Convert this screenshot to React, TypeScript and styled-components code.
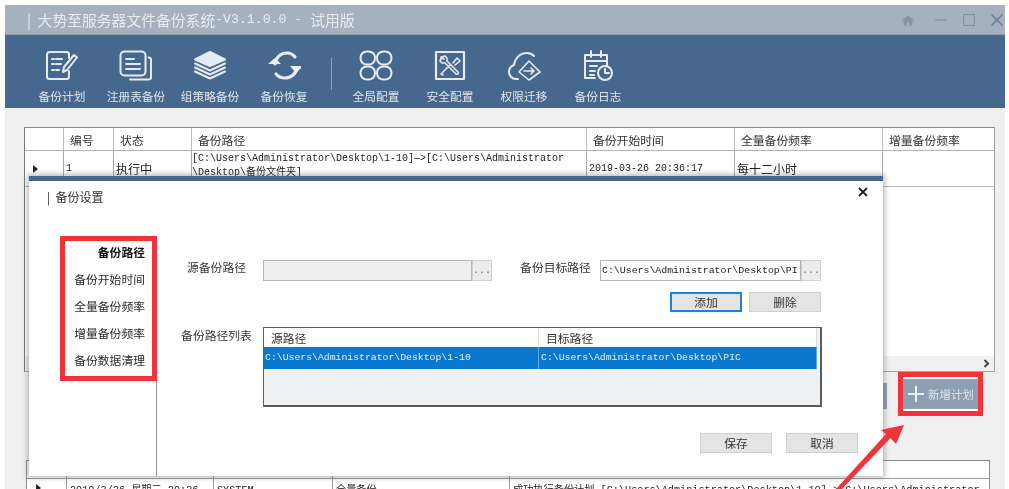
import React from "react";
import styled, { createGlobalStyle } from "styled-components";

const CJK = `"Noto Sans CJK SC", sans-serif`;
const MONO = `"Liberation Mono", "Noto Sans CJK SC", monospace`;
const RED = "#f1343b";
const NAVY = "#46688f";

const GlobalStyle = createGlobalStyle`
  html, body {
    margin: 0;
    padding: 0;
    background: #fff;
    overflow: hidden;
  }
  * { box-sizing: border-box; }
`;

const Page = styled.div`
  position: relative;
  width: 1009px;
  height: 489px;
  overflow: hidden;
  padding: 5px 4px 0 5px;
  font-family: ${CJK};
  color: #333;
  filter: blur(0.4px);
`;

const TitleBar = styled.div`
  height: 30px;
  background: #a6b1bf;
  border-bottom: 1px solid #8c9aab;
  display: flex;
  align-items: center;
  padding-left: 22px;
  color: #e9ecf0;
  font-size: 14.8px;
  white-space: pre;
`;

const Version = styled.span`
  font-family: ${MONO};
  font-size: 13.2px;
`;

const WindowButtons = styled.div`
  margin-left: auto;
  display: flex;
  align-items: center;
  gap: 16px;
  padding-right: 2px;
  padding-top: 1px;

  svg { display: block; }
  svg:first-child { margin-right: 5px; }
`;

const Toolbar = styled.div`
  height: 73px;
  background: ${NAVY};
  display: flex;
  align-items: flex-start;
  padding: 14px 0 0 20px;
`;

const ToolItem = styled.div`
  width: 74px;
  display: flex;
  flex-direction: column;
  align-items: center;
  color: #dfe5ec;
  font-size: 11.7px;
  line-height: 16px;

  svg { display: block; margin-bottom: 6px; }
`;

const ToolDivider = styled.div`
  width: 1px;
  height: 32px;
  margin: 9px 7px 0 10px;
  background: #8ea3bb;
`;

const Content = styled.div`
  height: 381px;
  background: #f0f0f0;
  padding: 19px 0 0 19px;
`;

const PlanTable = styled.div`
  position: relative;
  width: 971px;
  height: 245px;
  background: #fff;
  border: 1px solid #a3a3a3;
  border-left-color: #777;
  border-top-color: #888;
`;

const PlanRow = styled.div<{ $height: number }>`
  display: grid;
  grid-template-columns: 39px 50px 78px 395px 148px 148px 111px;
  height: ${(p) => p.$height}px;
  border-bottom: 1px solid #b4b4b4;
`;

const HeadCell = styled.div`
  display: flex;
  align-items: center;
  padding-left: 6px;
  font-size: 11.8px;
  border-right: 1px solid #bdbdbd;
  &:last-child { border-right: 0; }
`;

const BodyCell = styled.div<{ $mono?: boolean; $size?: number }>`
  display: flex;
  align-items: center;
  padding-left: 2px;
  font-family: ${(p) => (p.$mono ? MONO : CJK)};
  font-size: ${(p) => p.$size ?? 12}px;
  line-height: 14px;
  color: #222;
  border-right: 1px solid #a8a8a8;
  &:last-child { border-right: 0; }
`;

const PathCell = styled(BodyCell)`
  align-items: flex-start;
  padding: 1px 0 0 0;
  font-size: 10px;
  white-space: nowrap;
`;

const RowMarker = styled.span`
  width: 0;
  height: 0;
  margin-left: 6px;
  border-left: 5px solid #222;
  border-top: 4px solid transparent;
  border-bottom: 4px solid transparent;
`;

const ScrollStrip = styled.div`
  position: absolute;
  left: 0;
  right: 0;
  bottom: 0;
  height: 15px;
  background: #f0f0f0;
  display: flex;
  align-items: center;
  justify-content: flex-end;
  padding-right: 4px;
`;

const ActionRow = styled.div`
  width: 971px;
  height: 88px;
  display: flex;
  align-items: flex-start;
  justify-content: flex-end;
  padding-right: 12px;
`;

const RunButton = styled.div`
  width: 76px;
  height: 26px;
  margin: 11px 11px 0 0;
  background: #8b9cb0;
`;

const AddFrame = styled.div`
  width: 85px;
  height: 44px;
  border: 5px solid ${RED};
  background: #fff;
  padding: 2px 0;
`;

const AddButton = styled.div`
  height: 30px;
  background: #8f9fb2;
  display: flex;
  align-items: center;
  padding-left: 4px;
  gap: 3px;
  color: #dde2e8;
  font-size: 11.5px;
`;

const LogTable = styled.div`
  width: 964px;
  margin-left: 2px;
  background: #fff;
  border: 1px solid #8c8c8c;
  border-bottom: 0;
`;

const LogRow = styled.div<{ $height: number }>`
  display: grid;
  grid-template-columns: 40px 147px 119px 177px 479px;
  height: ${(p) => p.$height}px;
  border-bottom: 1px solid #9a9a9a;
`;

const LogCell = styled.div`
  display: flex;
  align-items: flex-end;
  padding: 0 0 3px 3px;
  font-family: ${MONO};
  font-size: 10.2px;
  line-height: 13px;
  color: #222;
  white-space: nowrap;
  overflow: hidden;
  border-right: 1px solid #9a9a9a;
  &:last-child { border-right: 0; }
`;

const LogBodyCell = styled(LogCell)`
  align-items: flex-start;
  padding: 5px 0 0 3px;
`;

const Dialog = styled.div`
  position: absolute;
  left: 29px;
  top: 176px;
  width: 854px;
  height: 300px;
  background: #fff;
  border-top: 5px solid ${NAVY};
  box-shadow: 0 0 5px 2px rgba(110, 110, 110, 0.45);
`;

const DialogHeader = styled.div`
  height: 55px;
  display: flex;
  align-items: flex-start;
  justify-content: space-between;
  padding: 7px 15px 0 18px;
  font-size: 12px;
  line-height: 18px;
  white-space: pre;
`;

const CloseButton = styled.div`
  margin-top: -1px;
  svg { display: block; }
`;

const DialogBody = styled.div`
  display: flex;
  height: 240px;
`;

const SideColumn = styled.div`
  width: 128px;
  padding-left: 31px;
  border-right: 1px solid #8f8f8f;
`;

const SideMenu = styled.div`
  width: 97px;
  height: 145px;
  border: 5px solid ${RED};
  padding: 0 7px 0 0;
  display: flex;
  flex-direction: column;
  align-items: flex-end;
`;

const SideItem = styled.div<{ $active?: boolean }>`
  height: 27.5px;
  line-height: 22px;
  font-size: 11.8px;
  font-weight: ${(p) => (p.$active ? 700 : 400)};
  color: ${(p) => (p.$active ? "#111" : "#2b2b2b")};
  white-space: nowrap;
`;

const FormPanel = styled.div`
  flex: 1;
  padding: 24px 0 0 24px;
  display: flex;
  flex-direction: column;
`;

const FormRow = styled.div`
  display: flex;
  align-items: flex-start;
  height: 21px;
`;

const FieldLabel = styled.div<{ $gap: number }>`
  width: 71px;
  margin-right: ${(p) => p.$gap}px;
  text-align: center;
  font-size: 11.8px;
  line-height: 14px;
  white-space: nowrap;
  color: #333;
`;

const PathInput = styled.div<{ $width: number; $disabled?: boolean }>`
  width: ${(p) => p.$width}px;
  height: 21px;
  padding-left: 1px;
  background: ${(p) => (p.$disabled ? "#efefef" : "#fff")};
  border: 1px solid #b5b5b5;
  font-family: ${MONO};
  font-size: 9.9px;
  line-height: 19px;
  color: #222;
  white-space: nowrap;
  overflow: hidden;
`;

const BrowseButton = styled.div`
  width: 20px;
  height: 21px;
  background: #ececec;
  border: 1px solid #d0d0d0;
  font-family: ${MONO};
  font-size: 10px;
  line-height: 19px;
  text-align: center;
  color: #666;
`;

const TargetGroup = styled.div`
  display: flex;
  margin-left: 28px;
`;

const ButtonRow = styled.div<{ $top: number; $right: number; $gap: number }>`
  display: flex;
  justify-content: flex-end;
  gap: ${(p) => p.$gap}px;
  margin-top: ${(p) => p.$top}px;
  padding-right: ${(p) => p.$right}px;
`;

const ActionButton = styled.div<{ $primary?: boolean }>`
  width: 72px;
  height: 20px;
  background: #e4e4e4;
  border: 1px solid ${(p) => (p.$primary ? "#1f82d6" : "#cfcfcf")};
  outline: ${(p) => (p.$primary ? "1px solid #1f82d6" : "none")};
  outline-offset: -2px;
  display: flex;
  align-items: center;
  justify-content: center;
  font-size: 11.8px;
  line-height: 18px;
  color: #333;
`;

const ListRow = styled.div`
  display: flex;
  align-items: flex-start;
  margin-top: 15px;
`;

const ListLabel = styled(FieldLabel)`
  margin-top: 1px;
`;

const PathList = styled.div`
  width: 559px;
  height: 80px;
  background: #eef0f2;
  border: 1px solid #5c5c5c;
  border-width: 1px 2px 2px 1px;
`;

const ListHead = styled.div`
  display: grid;
  grid-template-columns: 275px 278px;
  height: 19px;
  width: 553px;
  background: #fff;
`;

const ListHeadCell = styled.div`
  padding-left: 7px;
  font-size: 11.8px;
  line-height: 19px;
  border-right: 1px solid #d9d9d9;
`;

const ListItem = styled.div`
  display: grid;
  grid-template-columns: 275px 278px;
  width: 553px;
  height: 22px;
  background: #0b78d0;
  color: #e6f2fb;
  font-family: ${MONO};
  font-size: 9.8px;
  line-height: 22px;
`;

const ListItemCell = styled.div`
  padding-left: 1px;
  border-right: 1px solid #5fa7e0;
  &:last-child { padding-left: 2px; }
`;

const ArrowMark = styled.svg`
  position: absolute;
  left: 830px;
  top: 420px;
`;

const tools: { label: string; icon: React.ReactNode }[] = [
  {
    label: "备份计划",
    icon: (
      <>
        <path d="M24 9V5.500A2.500 2.500 0 0 0 21.500 3h-17A2.500 2.500 0 0 0 2 5.500v22A2.500 2.500 0 0 0 4.500 30h17a2.500 2.500 0 0 0 2.500-2.500V22" />
        <path d="M7 10h2M11 10h6M7 15h2M11 15h5M7 21h2M11 21h3" />
        <path d="M18 23l1-5L29 6l3 2.500L22 21z" />
      </>
    ),
  },
  {
    label: "注册表备份",
    icon: (
      <>
        <rect x="1.500" y="2.500" width="25" height="24" rx="4" />
        <path d="M7 10h8M7 15h14M7 20h14" />
        <path d="M29.500 8.500c1.500 0 2.500 1 2.500 2.500v17c0 1.500-1 2.500-2.500 2.500H11" />
      </>
    ),
  },
  {
    label: "组策略备份",
    icon: (
      <>
        <path d="M17 3l15 7.500L17 17 2 10.500z" fill="#e6ebf1" />
        <path d="M2 14.500l15 7 15-7M2 18.500l15 7 15-7M2 22.500l15 7 15-7" />
      </>
    ),
  },
  {
    label: "备份恢复",
    icon: (
      <>
        <path strokeWidth="3.200" d="M8 15c1-7 6-11 12-11 3 0 6 1.500 8 4M30 19c-1 6-6 10-12 10-4 0-7-1.500-9-4" />
        <path fill="#eef1f5" stroke="none" d="M1 15l7-6 6 6H9zM36 17l-7 7-6-7h5z" />
      </>
    ),
  },
  {
    label: "全局配置",
    icon: (
      <>
        <rect x="1.500" y="2.500" width="14.500" height="13" rx="6.200" />
        <rect x="18" y="2.500" width="14.500" height="13" rx="6.200" />
        <rect x="1.500" y="17.500" width="14.500" height="13" rx="6.200" />
        <rect x="18" y="17.500" width="14.500" height="13" rx="6.200" />
      </>
    ),
  },
  {
    label: "安全配置",
    icon: (
      <>
        <rect x="3" y="3" width="28" height="27" strokeWidth="2.200" />
        <path d="M9 24l8-8M11 10l-3-2 4-1 2 2v3l11 11c1 1 0 3-2 2L12 14H9l-2-2 1-3zM20 14l4-5 3 3-5 4M8 25l2 1" strokeWidth="1.600" />
      </>
    ),
  },
  {
    label: "权限迁移",
    icon: (
      <>
        <path d="M11 30H9c-4 0-7-3-7-7 0-3 2-6 5-7 1-7 6-12 13-12 3 0 5 1 7 3" />
        <path d="M22 12l11 11-11 8-10-8z" strokeWidth="1.600" />
        <path d="M17 22h10M24 19l3 3-3 3" strokeWidth="1.600" />
      </>
    ),
  },
  {
    label: "备份日志",
    icon: (
      <>
        <path d="M14 29H4V6h22v10M4 12h22M10 2v6M20 2v6M9 17h7M9 22h5M9 26h4" />
        <circle cx="24" cy="24" r="7" />
        <path d="M24 20v4h4" />
      </>
    ),
  },
];

const App = () => {
  return (
    <>
      <GlobalStyle />
      <Page>
        <TitleBar>
          {"|  大势至服务器文件备份系统"}
          <Version>{"-V3.1.0.0 - "}</Version>
          试用版
          <WindowButtons>
            <svg width="12" height="11" viewBox="0 0 14 12" fill="#87929f">
              <path d="M7 0l7 6h-2v6H8.500V8h-3v4H2V6H0z" />
            </svg>
            <svg width="12" height="12" viewBox="0 0 12 12" stroke="#87929f" strokeWidth="1.300">
              <path d="M0 6h12" />
            </svg>
            <svg width="12" height="12" viewBox="0 0 12 12" fill="none" stroke="#87929f" strokeWidth="1.200">
              <rect x="0.600" y="0.600" width="10.800" height="10.800" />
            </svg>
            <svg width="12" height="12" viewBox="0 0 12 12" stroke="#6f7b89" strokeWidth="1.500">
              <path d="M0.500 0.500l11 11M11.500 0.500l-11 11" />
            </svg>
          </WindowButtons>
        </TitleBar>
        <Toolbar>
          {tools.map((tool, i) => (
            <React.Fragment key={tool.label}>
              {i === 4 && <ToolDivider />}
              <ToolItem>
                <svg
                  width="34"
                  height="33"
                  viewBox="0 0 34 33"
                  fill="none"
                  stroke="#e6ebf1"
                  strokeWidth="2"
                  strokeLinecap="round"
                  strokeLinejoin="round"
                >
                  {tool.icon}
                </svg>
                {tool.label}
              </ToolItem>
            </React.Fragment>
          ))}
        </Toolbar>
        <Content>
          <PlanTable>
            <PlanRow $height={23}>
              <HeadCell />
              <HeadCell>编号</HeadCell>
              <HeadCell>状态</HeadCell>
              <HeadCell>备份路径</HeadCell>
              <HeadCell>备份开始时间</HeadCell>
              <HeadCell>全量备份频率</HeadCell>
              <HeadCell>增量备份频率</HeadCell>
            </PlanRow>
            <PlanRow $height={36}>
              <BodyCell>
                <RowMarker />
              </BodyCell>
              <BodyCell $mono $size={10}>1</BodyCell>
              <BodyCell>执行中</BodyCell>
              <PathCell $mono>
                <div>
                  {"[C:\\Users\\Administrator\\Desktop\\1-10]—>[C:\\Users\\Administrator"}
                  <br />
                  {"\\Desktop\\备份文件夹]"}
                </div>
              </PathCell>
              <BodyCell $mono $size={10}>2019-03-26 20:36:17</BodyCell>
              <BodyCell>每十二小时</BodyCell>
              <BodyCell />
            </PlanRow>
            <ScrollStrip>
              <svg width="7" height="9" viewBox="0 0 7 9" fill="none" stroke="#444" strokeWidth="2">
                <path d="M1.500 1l3.500 3.500L1.500 8" />
              </svg>
            </ScrollStrip>
          </PlanTable>
          <ActionRow>
            <RunButton />
            <AddFrame>
              <AddButton>
                <svg width="18" height="18" viewBox="0 0 18 18" stroke="#eef1f4" strokeWidth="2">
                  <path d="M9 1v16M1 9h16" />
                </svg>
                新增计划
              </AddButton>
            </AddFrame>
          </ActionRow>
          <LogTable>
            <LogRow $height={18}>
              <LogCell />
              <LogCell>执行时间</LogCell>
              <LogCell>执行用户</LogCell>
              <LogCell>备份类型</LogCell>
              <LogCell>详情</LogCell>
            </LogRow>
            <LogRow $height={20}>
              <LogBodyCell>
                <RowMarker />
              </LogBodyCell>
              <LogBodyCell>2019/3/26 星期二 20:36</LogBodyCell>
              <LogBodyCell>SYSTEM</LogBodyCell>
              <LogBodyCell>全量备份</LogBodyCell>
              <LogBodyCell>{"成功执行备份计划 [C:\\Users\\Administrator\\Desktop\\1-10]—>[C:\\Users\\Administrator"}</LogBodyCell>
            </LogRow>
          </LogTable>
        </Content>

        <Dialog>
          <DialogHeader>
            <span>{"|  备份设置"}</span>
            <CloseButton>
              <svg width="10" height="10" viewBox="0 0 10 10" stroke="#222" strokeWidth="1.800">
                <path d="M1 1l8 8M9 1l-8 8" />
              </svg>
            </CloseButton>
          </DialogHeader>
          <DialogBody>
            <SideColumn>
              <SideMenu>
                <SideItem $active>备份路径</SideItem>
                <SideItem>备份开始时间</SideItem>
                <SideItem>全量备份频率</SideItem>
                <SideItem>增量备份频率</SideItem>
                <SideItem>备份数据清理</SideItem>
              </SideMenu>
            </SideColumn>
            <FormPanel>
              <FormRow>
                <FieldLabel $gap={11}>源备份路径</FieldLabel>
                <PathInput $width={209} $disabled />
                <BrowseButton>...</BrowseButton>
                <TargetGroup>
                  <FieldLabel $gap={9}>备份目标路径</FieldLabel>
                  <PathInput $width={201}>{"C:\\Users\\Administrator\\Desktop\\PI"}</PathInput>
                  <BrowseButton>...</BrowseButton>
                </TargetGroup>
              </FormRow>
              <ButtonRow $top={11} $right={62} $gap={7}>
                <ActionButton $primary>添加</ActionButton>
                <ActionButton>删除</ActionButton>
              </ButtonRow>
              <ListRow>
                <ListLabel $gap={11}>备份路径列表</ListLabel>
                <PathList>
                  <ListHead>
                    <ListHeadCell>源路径</ListHeadCell>
                    <ListHeadCell>目标路径</ListHeadCell>
                  </ListHead>
                  <ListItem>
                    <ListItemCell>{"C:\\Users\\Administrator\\Desktop\\1-10"}</ListItemCell>
                    <ListItemCell>{"C:\\Users\\Administrator\\Desktop\\PIC"}</ListItemCell>
                  </ListItem>
                </PathList>
              </ListRow>
              <ButtonRow $top={26} $right={25} $gap={14}>
                <ActionButton>保存</ActionButton>
                <ActionButton>取消</ActionButton>
              </ButtonRow>
            </FormPanel>
          </DialogBody>
        </Dialog>

        <ArrowMark width="80" height="69" viewBox="0 0 80 69">
          <polygon fill={RED} points="74,5 66,24 60.500,18 12,69 6,69 56,14 51,10" />
        </ArrowMark>
      </Page>
    </>
  );
};

export default App;
